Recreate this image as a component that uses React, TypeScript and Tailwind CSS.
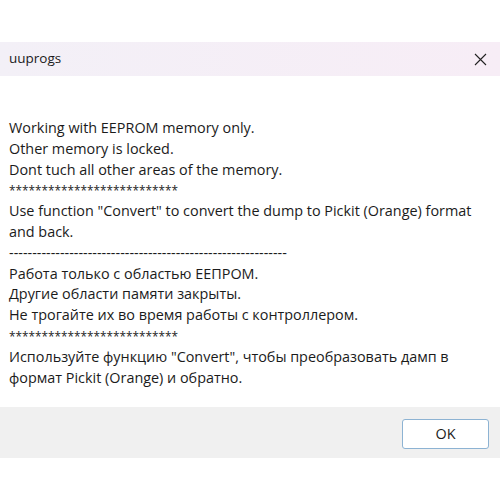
import React from "react";

type Line = { t: string; k?: "star" | "dash" };

const lines: Line[] = [
  { t: "Working with EEPROM memory only." },
  { t: "Other memory is locked." },
  { t: "Dont tuch all other areas of the memory." },
  { t: "**************************", k: "star" },
  { t: "Use function \"Convert\" to convert the dump to Pickit (Orange) format" },
  { t: "and back." },
  { t: "------------------------------------------------------------", k: "dash" },
  { t: "Работа только с областью ЕЕПРОМ." },
  { t: "Другие области памяти закрыты." },
  { t: "Не трогайте их во время работы с контроллером." },
  { t: "**************************", k: "star" },
  { t: "Используйте функцию \"Convert\", чтобы преобразовать дамп в" },
  { t: "формат Pickit (Orange) и обратно." },
];

export default function App() {
  return (
    <div
      className="w-[500px] h-[500px] bg-white flex flex-col text-[#1b1b1b]"
      style={{ fontFamily: '"Open Sans", "Noto Sans", sans-serif' }}
    >
      <div className="h-[42px] bg-white" />
      <div className="h-[34px] flex items-center justify-between bg-gradient-to-r from-[#f3f0f7] to-[#f7edf6] pl-[9px] pr-[13px]">
        <span className="text-[13.5px] leading-none">uuprogs</span>
        <svg width="13" height="13" viewBox="0 0 13 13" className="text-[#222]">
          <path d="M1 1 L12 12 M12 1 L1 12" stroke="currentColor" strokeWidth="1.1" fill="none" />
        </svg>
      </div>
      <div className="h-[331px] bg-white pt-[42px] pl-[9px]">
        {lines.map((l, i) =>
          l.k === "star" ? (
            <div key={i} className="h-[20.8px] text-[11.8px] leading-[20.8px] whitespace-pre">
              {l.t}
            </div>
          ) : (
            <div key={i} className="h-[20.8px] text-[14.4px] leading-[20.8px] whitespace-pre">
              {l.t}
            </div>
          )
        )}
      </div>
      <div className="h-[51px] bg-[#f0f0f0] flex justify-end pt-[12px] pr-[11px]">
        <button className="w-[87px] h-[30px] bg-white border border-[#8db3d3] rounded-[3px] text-[14.4px] text-[#1b1b1b]">
          OK
        </button>
      </div>
      <div className="flex-1 bg-white" />
    </div>
  );
}
